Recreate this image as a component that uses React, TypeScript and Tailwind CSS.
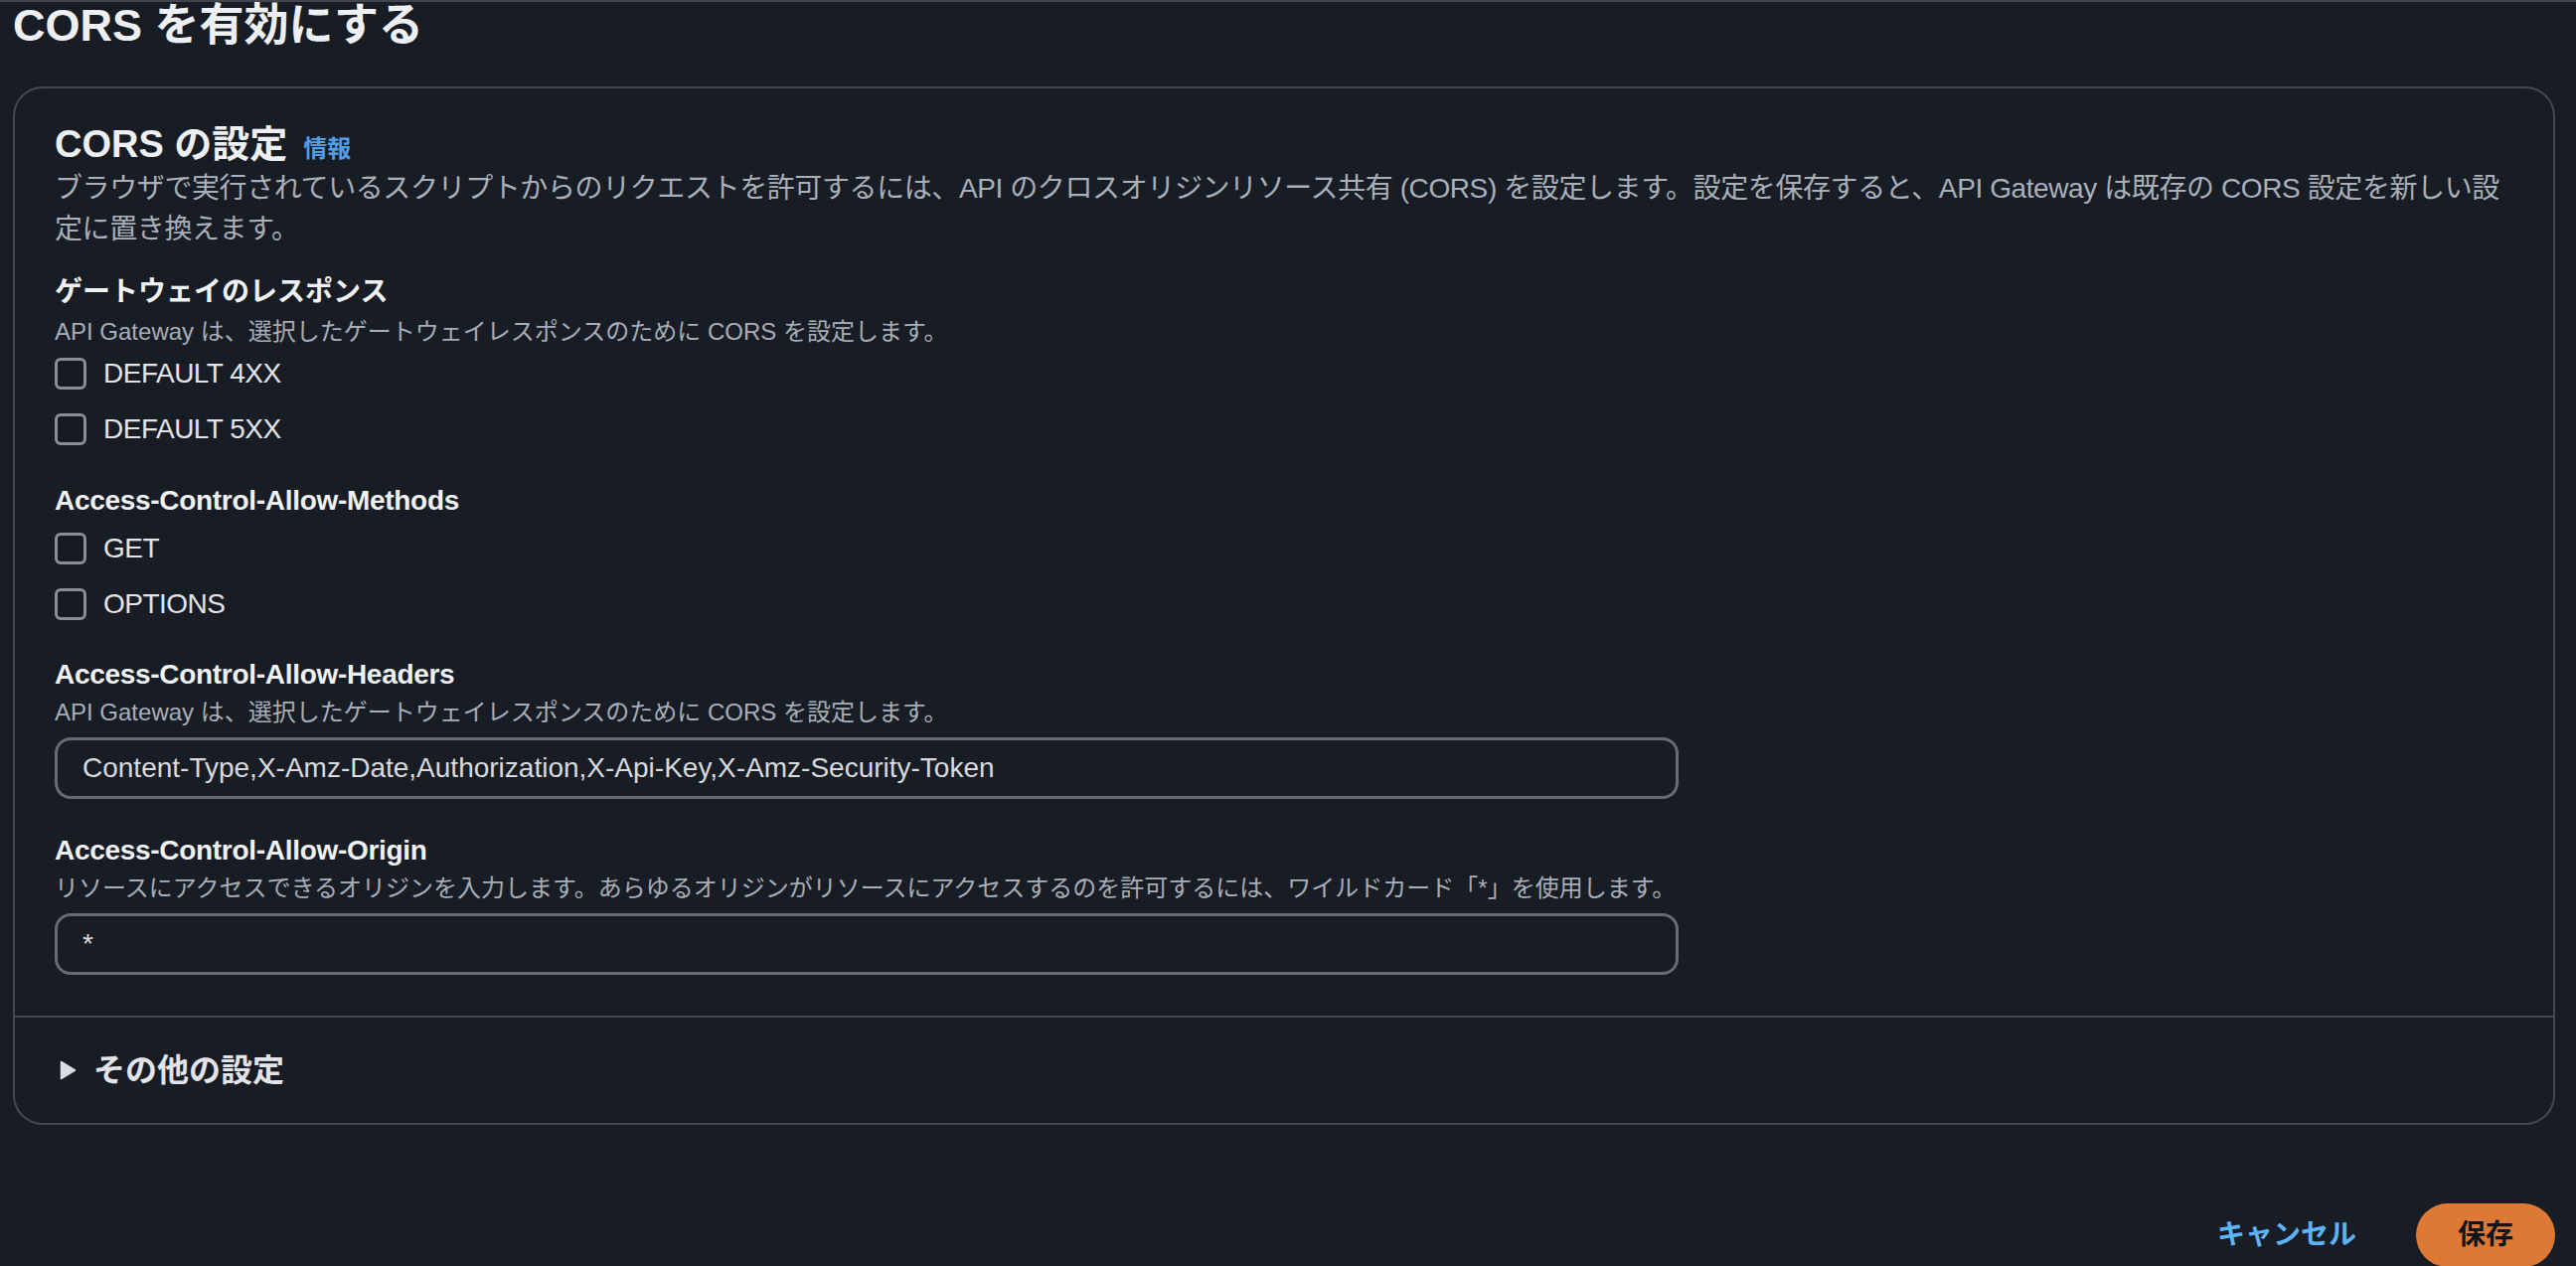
import { useState } from 'react';

const font = "font-['Liberation_Sans','Noto_Sans_CJK_JP',sans-serif]";

function Checkbox({ label }: { label: string }) {
  const [checked, setChecked] = useState(false);
  return (
    <label className="h-[56px] flex items-center gap-[17px] cursor-pointer">
      <span
        onClick={() => setChecked(!checked)}
        className="w-8 h-8 rounded-[6px] border-[3px] border-[#8c8c94] bg-[#161b22] flex items-center justify-center"
      >
        {checked && (
          <svg viewBox="0 0 16 16" className="w-5 h-5 text-[#e9ebed]">
            <path d="M3 8.5l3 3 7-7" fill="none" stroke="currentColor" strokeWidth="2" />
          </svg>
        )}
      </span>
      <span className="text-[28px] tracking-[-0.5px] text-[#e3e4e8]">{label}</span>
    </label>
  );
}

function Field({ label, desc, value }: { label: string; desc: string; value: string }) {
  return (
    <div>
      <div className="text-[28px] leading-[40px] font-bold tracking-[-0.3px] text-[#f0f1f3]">{label}</div>
      <div className="mt-1 text-[24px] leading-[28px] text-[#a8aeb7]">{desc}</div>
      <div className="mt-[11px] w-[1634px] h-[62px] rounded-[16px] border-[3px] border-[#676b74] flex items-center px-[25px]">
        <input
          defaultValue={value}
          className="w-full bg-transparent outline-none text-[28px] text-[#d9dade]"
        />
      </div>
    </div>
  );
}

export default function App() {
  const [open, setOpen] = useState(false);

  return (
    <div className={`min-h-screen bg-[#181d25] border-t-2 border-[#40454e] ${font}`}>
      {/* Page title */}
      <h1 className="pl-[13px] text-[45px] leading-[48px] font-bold text-[#eeeff2]">CORS を有効にする</h1>

      {/* Container */}
      <div className="mt-[37px] ml-[13px] mr-[21px] border-2 border-[#434852] rounded-[30px]">
        <div className="px-[40px] pt-[32px] pb-[41px]">
          <div className="flex items-baseline gap-4">
            <h2 className="text-[38px] leading-[48px] font-bold text-[#eeeff2]">CORS の設定</h2>
            <a className="text-[24px] font-bold text-[#539fe5] cursor-pointer">情報</a>
          </div>
          <p className="text-[28px] leading-[41px] tracking-[-0.4px] text-[#aab0b9]">
            ブラウザで実行されているスクリプトからのリクエストを許可するには、API のクロスオリジンリソース共有 (CORS) を設定します。設定を保存すると、API Gateway は既存の CORS 設定を新しい設
            <br />
            定に置き換えます。
          </p>

          <div className="mt-[23px]">
            <div className="text-[28px] leading-[40px] font-bold text-[#f0f1f3]">ゲートウェイのレスポンス</div>
            <div className="mt-[6px] text-[24px] leading-[28px] text-[#a8aeb7]">
              API Gateway は、選択したゲートウェイレスポンスのために CORS を設定します。
            </div>
            <Checkbox label="DEFAULT 4XX" />
            <Checkbox label="DEFAULT 5XX" />
          </div>

          <div className="mt-6">
            <div className="text-[28px] leading-[40px] font-bold tracking-[-0.3px] text-[#f0f1f3]">Access-Control-Allow-Methods</div>
            <Checkbox label="GET" />
            <Checkbox label="OPTIONS" />
          </div>

          <div className="mt-[23px]">
            <Field
              label="Access-Control-Allow-Headers"
              desc="API Gateway は、選択したゲートウェイレスポンスのために CORS を設定します。"
              value="Content-Type,X-Amz-Date,Authorization,X-Api-Key,X-Amz-Security-Token"
            />
          </div>

          <div className="mt-8">
            <Field
              label="Access-Control-Allow-Origin"
              desc="リソースにアクセスできるオリジンを入力します。あらゆるオリジンがリソースにアクセスするのを許可するには、ワイルドカード「*」を使用します。"
              value="*"
            />
          </div>
        </div>

        {/* Additional settings */}
        <div className="border-t-2 border-[#434852]">
          <button
            onClick={() => setOpen(!open)}
            className="h-[106px] w-full flex items-center gap-[17px] pl-[45px] text-left"
          >
            <svg viewBox="0 0 17 20" className={`w-[17px] h-[20px] text-[#dcdde2] ${open ? 'rotate-90' : ''}`}>
              <path d="M1.5 1.5 L15.5 10 L1.5 18.5 Z" fill="currentColor" stroke="currentColor" strokeWidth="1.5" strokeLinejoin="round" />
            </svg>
            <span className="text-[32px] font-bold text-[#e3e4e8]">その他の設定</span>
          </button>
        </div>
      </div>

      {/* Actions */}
      <div className="mt-[79px] mr-[21px] flex justify-end items-center">
        <button className="px-[40px] h-[64px] text-[28px] font-bold text-[#5cb3f6]">キャンセル</button>
        <button className="ml-[20px] h-[64px] px-[42px] rounded-full bg-[#dd7835] text-[28px] font-bold text-[#0f141a]">保存</button>
      </div>
    </div>
  );
}
